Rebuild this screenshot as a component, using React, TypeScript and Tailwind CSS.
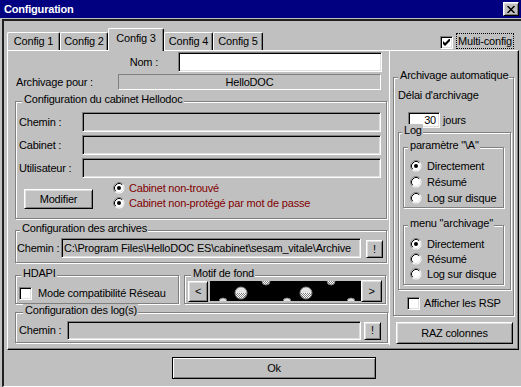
import React from 'react';

const raised =
  'border border-t-white border-l-white border-r-black border-b-black shadow-[inset_1px_1px_0_#dfdfdf,inset_-1px_-1px_0_#808080] bg-[#c0c0c0]';
const sunken =
  'border border-t-[#808080] border-l-[#808080] border-r-white border-b-white shadow-[inset_1px_1px_0_#000,inset_-1px_-1px_0_#dfdfdf]';

interface GroupProps {
  title: string;
  className?: string;
  legend?: string;
  children?: React.ReactNode;
}

function Group({ title, className = '', legend = 'left-[5px]', children }: GroupProps) {
  return (
    <div
      className={`relative shrink-0 border border-[#808080] shadow-[inset_1px_1px_0_#fff,1px_1px_0_#fff] ${className}`}
    >
      <span
        className={`absolute -top-[9px] bg-[#c0c0c0] pl-[2px] pr-[1px] leading-[13px] whitespace-nowrap ${legend}`}
      >
        {title}
      </span>
      {children}
    </div>
  );
}

function Radio({ checked }: { checked?: boolean }) {
  return (
    <svg width="12" height="12" viewBox="0 0 12 12" className="shrink-0 block">
      <circle cx="6" cy="6" r="5.5" fill="#fff" />
      <path d="M2.11 9.89A5.5 5.5 0 0 1 9.89 2.11" fill="none" stroke="#808080" />
      <path d="M2.82 9.18A4.5 4.5 0 0 1 9.18 2.82" fill="none" stroke="#000" />
      <path d="M9.18 2.82A4.5 4.5 0 0 1 2.82 9.18" fill="none" stroke="#dfdfdf" />
      {checked && <circle cx="6" cy="6" r="2" fill="#000" />}
    </svg>
  );
}

function Check({ checked }: { checked?: boolean }) {
  return (
    <span className={`${sunken} bg-white w-[13px] h-[13px] flex items-center justify-center shrink-0`}>
      {checked && (
        <svg width="7" height="7" viewBox="0 0 7 7" className="block">
          <path d="M0 2L2 4L7 -1V2L2 7L0 5Z" fill="#000" />
        </svg>
      )}
    </span>
  );
}

function RadioList({ items, gap }: { items: string[]; gap: string }) {
  return (
    <div className={`flex flex-col pl-[6px] pt-[12px] ${gap}`}>
      {items.map((item, i) => (
        <div key={item} className="flex items-center h-[12px]">
          <Radio checked={i === 0} />
          <span className="ml-[5px] whitespace-nowrap">{item}</span>
        </div>
      ))}
    </div>
  );
}

function Ball({ cx, cy, r }: { cx: number; cy: number; r: number }) {
  return (
    <g>
      <circle cx={cx} cy={cy} r={r} fill="url(#dither)" />
      <path d={`M${cx - r} ${cy}A${r} ${r} 0 0 1 ${cx + r} ${cy}Z`} fill="#e4e4e4" />
      <circle cx={cx} cy={cy} r={r} fill="none" stroke="#808080" />
    </g>
  );
}

function Motif() {
  const big = [
    [31, 12],
    [96, 12],
  ];
  const small = [
    [56, 0],
    [121, 0],
    [13, 21],
    [77, 21],
    [141, 21],
  ];
  return (
    <svg width="151" height="20" viewBox="0 0 151 20" className="block ml-[2px] shrink-0">
      <defs>
        <pattern id="dither" width="2" height="2" patternUnits="userSpaceOnUse">
          <rect width="2" height="2" fill="#808080" />
          <rect width="1" height="1" fill="#fff" />
          <rect x="1" y="1" width="1" height="1" fill="#fff" />
        </pattern>
      </defs>
      <rect width="151" height="20" fill="#000" />
      {big.map(([x, y]) => (
        <Ball key={`b${x}`} cx={x} cy={y} r={6} />
      ))}
      {small.map(([x, y]) => (
        <Ball key={`s${x}`} cx={x} cy={y} r={4} />
      ))}
    </svg>
  );
}

const tabs = [
  { label: 'Config 1', w: 'w-[53px]' },
  { label: 'Config 2', w: 'w-[48px]' },
  { label: 'Config 3', w: 'w-[56px]', active: true },
  { label: 'Config 4', w: 'w-[49px]' },
  { label: 'Config 5', w: 'w-[50px]' },
];

export default function App() {
  return (
    <div className="w-[521px] h-[387px] overflow-hidden bg-[#c0c0c0] flex flex-col text-[11px] leading-[13px] tracking-[-0.2px] text-black font-['Liberation_Sans',Arial,sans-serif] select-none">
      {/* title bar */}
      <div className="h-[18px] shrink-0 bg-[#000080] flex items-center justify-between pl-[4px] pr-[2px]">
        <span className="text-white font-bold text-[11px]">Configuration</span>
        <span className={`${raised} w-[16px] h-[14px] flex items-center justify-center`}>
          <svg width="8" height="7" viewBox="0 0 8 7" className="block">
            <path d="M0.5 0L7.5 7M7.5 0L0.5 7" stroke="#000" strokeWidth="1.5" />
          </svg>
        </span>
      </div>

      <div className="flex-1 ml-[2px] mt-[1px] border-l-2 border-t-2 border-l-[#202020] border-t-[#202020] border-b border-b-white flex flex-col">
        {/* tabs */}
        <div className="h-[29px] shrink-0 flex items-end pl-[3px]">
          {tabs.map((t) =>
            t.active ? (
              <div
                key={t.label}
                className={`relative z-10 -mb-[1px] h-[23px] ${t.w} bg-[#c0c0c0] border-t border-l border-r border-t-white border-l-white border-r-black shadow-[inset_-1px_0_0_#808080] rounded-t-[2px] flex justify-center pt-[3px]`}
              >
                {t.label}
              </div>
            ) : (
              <div
                key={t.label}
                className={`h-[18px] ${t.w} border-t border-l border-r border-t-white border-l-white border-r-black shadow-[inset_-1px_0_0_#808080] rounded-t-[2px] flex items-center justify-center`}
              >
                {t.label}
              </div>
            )
          )}
          <div className="flex items-end ml-[177px] mb-[1px]">
            <Check checked />
            <span className="ml-[3px] h-[16px] w-[58px] border border-dotted border-black flex items-center justify-center whitespace-nowrap">
              Multi-config
            </span>
          </div>
        </div>

        {/* tab panel */}
        <div className="ml-[3px] w-[512px] h-[300px] shrink-0 border border-t-white border-l-white border-r-black border-b-black shadow-[inset_-1px_-1px_0_#808080] flex">
          {/* left part */}
          <div className="w-[382px] h-[294px] shrink-0 flex flex-col border-r border-r-white">
            <div className="flex items-center mt-[1px] h-[20px]">
              <span className="w-[150px] text-right">Nom :</span>
              <div className={`${sunken} bg-white ml-[20px] w-[204px] h-[20px]`} />
            </div>

            <div className="flex items-center mt-[2px] h-[16px]">
              <span className="w-[110px] pl-[8px]">Archivage pour :</span>
              <div className="w-[263px] h-[16px] border border-t-[#808080] border-l-[#808080] border-r-white border-b-white flex items-center justify-center">
                HelloDOC
              </div>
            </div>

            <Group
              title="Configuration du cabinet Hellodoc"
              className="mt-[11px] ml-[7px] w-[372px] h-[118px]"
              legend="left-[6px]"
            >
              <div className="flex flex-col gap-[3px] pt-[10px]">
                {['Chemin :', 'Cabinet :', 'Utilisateur :'].map((l) => (
                  <div key={l} className="flex items-center">
                    <span className="w-[66px] pl-[3px]">{l}</span>
                    <div className={`${sunken} w-[299px] h-[20px]`} />
                  </div>
                ))}
              </div>
              <div className="flex items-end mt-[4px]">
                <button className={`${raised} ml-[8px] w-[69px] h-[20px] flex items-center justify-center`}>
                  Modifier
                </button>
                <div className="ml-[20px] flex flex-col gap-[3px] text-[#800000]">
                  <div className="flex items-center h-[12px]">
                    <Radio checked />
                    <span className="ml-[4px]">Cabinet non-trouvé</span>
                  </div>
                  <div className="flex items-center h-[12px]">
                    <Radio checked />
                    <span className="ml-[4px]">Cabinet non-protégé par mot de passe</span>
                  </div>
                </div>
              </div>
            </Group>

            <Group
              title="Configuration des archives"
              className="mt-[11px] ml-[7px] w-[372px] h-[33px]"
              legend="left-[4px]"
            >
              <div className="flex items-start pt-[7px] pl-[1px]">
                <span className="w-[44px] h-[20px] flex items-center">Chemin :</span>
                <div
                  className={`${sunken} w-[300px] h-[20px] flex items-center pl-[2px] overflow-hidden whitespace-nowrap`}
                >
                  C:\Program Files\HelloDOC ES\cabinet\sesam_vitale\Archive
                </div>
                <button className={`${raised} ml-[5px] mt-[2px] w-[17px] h-[18px] flex items-center justify-center`}>
                  !
                </button>
              </div>
            </Group>

            <div className="flex mt-[12px] ml-[7px]">
              <Group title="HDAPI" className="w-[164px] h-[29px]" legend="left-[5px]">
                <div className="flex items-center pl-[3px] pt-[11px]">
                  <Check />
                  <span className="ml-[6px] whitespace-nowrap">Mode compatibilité Réseau</span>
                </div>
              </Group>
              <Group title="Motif de fond" className="ml-[5px] w-[202px] h-[29px]" legend="left-[6px]">
                <div className="flex items-center pl-[3px] pt-[4px]">
                  <button className={`${raised} w-[20px] h-[21px] flex items-center justify-center`}>&lt;</button>
                  <Motif />
                  <button className={`${raised} w-[21px] h-[22px] flex items-center justify-center`}>&gt;</button>
                </div>
              </Group>
            </div>

            <Group
              title="Configuration des log(s)"
              className="mt-[8px] ml-[7px] w-[373px] h-[31px]"
              legend="left-[7px]"
            >
              <div className="flex items-center pl-[3px] pt-[8px]">
                <span className="w-[48px]">Chemin :</span>
                <div className={`${sunken} w-[294px] h-[19px]`} />
                <button className={`${raised} ml-[3px] w-[17px] h-[18px] flex items-center justify-center`}>
                  !
                </button>
              </div>
            </Group>
          </div>

          {/* right part */}
          <div className="flex flex-col">
            <Group
              title="Archivage automatique"
              className="mt-[26px] ml-[3px] w-[121px] h-[239px]"
              legend="left-[4px]"
            >
              <div className="pl-[4px] mt-[11px] whitespace-nowrap">Délai d'archivage</div>
              <div className="flex items-center pl-[14px] mt-[10px] h-[16px]">
                <div
                  className={`${sunken} bg-white w-[32px] h-[16px] flex items-center justify-end pr-[3px]`}
                >
                  30
                </div>
                <span className="ml-[3px]">jours</span>
              </div>
              <Group title="Log" className="ml-[4px] mt-[4px] w-[113px] h-[158px]" legend="left-[3px]">
                <Group
                  title={'paramètre "\\A"'}
                  className="ml-[4px] mt-[14px] w-[101px] h-[61px]"
                  legend="left-[4px]"
                >
                  <RadioList items={['Directement', 'Résumé', 'Log sur disque']} gap="gap-[4px]" />
                </Group>
                <Group
                  title={'menu "archivage"'}
                  className="ml-[4px] mt-[17px] w-[101px] h-[60px]"
                  legend="left-[4px]"
                >
                  <RadioList items={['Directement', 'Résumé', 'Log sur disque']} gap="gap-[3px]" />
                </Group>
              </Group>
              <div className="flex items-center pl-[13px] mt-[7px]">
                <Check />
                <span className="ml-[4px] whitespace-nowrap">Afficher les RSP</span>
              </div>
            </Group>
            <button className={`${raised} ml-[6px] mt-[6px] w-[117px] h-[22px] flex items-center justify-center`}>
              RAZ colonnes
            </button>
          </div>
        </div>

        {/* bottom */}
        <button className="ml-[168px] mt-[7px] w-[204px] h-[22px] border border-black shadow-[inset_1px_1px_0_#fff,inset_-1px_-1px_0_#808080] bg-[#c0c0c0] flex items-center justify-center">
          Ok
        </button>
      </div>
    </div>
  );
}
